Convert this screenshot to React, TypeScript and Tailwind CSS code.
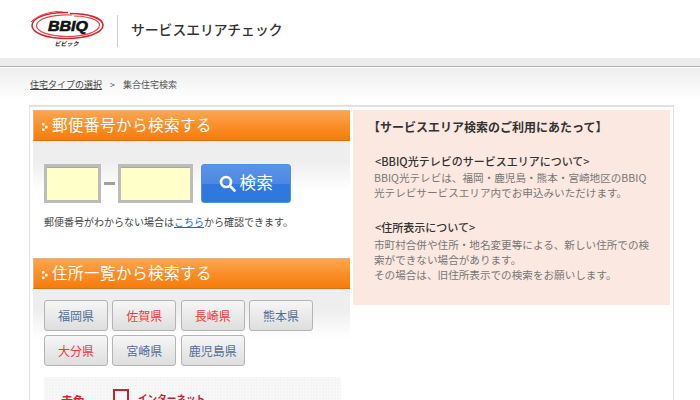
import React from 'react';

const font = { fontFamily: '"Noto Sans CJK JP", "Liberation Sans", sans-serif' };

const prefectures = [
  { name: '福岡県', active: false },
  { name: '佐賀県', active: true },
  { name: '長崎県', active: true },
  { name: '熊本県', active: false },
  { name: '大分県', active: true },
  { name: '宮崎県', active: false },
  { name: '鹿児島県', active: false },
];

const Logo = () => (
  <svg width="76" height="44" viewBox="0 0 76 44" className="block">
    <path d="M38 1.5 C16 1 2 7 2 14.5 C2 22 16 27.5 36 27.5 C57 27.5 73 22 73 14 C73 7 58 2.5 40 2.5" fill="none" stroke="#d8262c" strokeWidth="1.6" />
    <path d="M42 4 C22 3 7 8 6.5 14.5 C6.5 21 20 25.5 37 25.5 C54 25.5 69.5 21 69.5 14 C69.5 8.5 56 5 44 5" fill="none" stroke="#e4474c" strokeWidth="1.2" />
    <path d="M1 11 C7 4 20 0.5 33 0" fill="none" stroke="#e4474c" strokeWidth="1" />
    <text x="18" y="20" textLength="40" lengthAdjust="spacingAndGlyphs" fontFamily="Liberation Sans, sans-serif" fontSize="14" fontWeight="700" fontStyle="italic" fill="#111" stroke="#111" strokeWidth="0.6">BBIQ</text>
    <text x="36.5" y="35" textAnchor="middle" fontFamily="Noto Sans CJK JP, sans-serif" fontSize="6" fontWeight="700" fontStyle="italic" fill="#222">ビビック</text>
  </svg>
);

const SectionBar = ({ title }: { title: string }) => (
  <div className="flex items-center h-[31px] pl-[8px] gap-[4px] border-t border-l border-[#eeb07a] border-b border-b-[#d9700f] bg-gradient-to-b from-[#f9a652] via-[#fb8f26] to-[#f47c0b] text-white text-[15.6px] tracking-[0.4px]">
    <svg width="6" height="8" viewBox="0 0 6 8" className="mt-[2px]" fill="white">
      <rect x="0" y="0" width="2.5" height="2.5" />
      <rect x="3" y="2.8" width="2.5" height="2.5" />
      <rect x="0" y="5.5" width="2.5" height="2.5" />
    </svg>
    <span className="leading-none pb-[2px]">{title}</span>
  </div>
);

const ZipInput = ({ width }: { width: string }) => (
  <input className={`${width} h-[39px] bg-[#ffffc9] border-[3px] border-[#bcbcb8] shadow-[inset_0_1px_0_#a8a8a0] outline-none`} />
);

export default function App() {
  return (
    <div style={font} className="w-[700px] h-[400px] overflow-hidden bg-white text-[#333]">
      <header className="flex items-center h-[58px] pl-[30px]">
        <div className="pt-[8px]">
          <Logo />
        </div>
        <div className="w-px h-[32px] bg-[#ccc] ml-[11px] mt-[3px]" />
        <h1 className="ml-[13px] mt-[1px] text-[13.8px] font-medium text-[#333]">サービスエリアチェック</h1>
      </header>

      <div className="h-[8px] bg-[#ececec] bg-[radial-gradient(#ffffff_0.6px,transparent_0.7px)] bg-[length:2px_2px]" />
      <div className="h-px bg-[#aeaeae]" />

      <nav className="flex items-center h-[33px] pl-[30px] pt-[2px] text-[9px] border-t border-white bg-gradient-to-b from-[#eeeeee] to-white">
        <a className="underline text-[#444]">住宅タイプの選択</a>
        <span className="ml-[8px] mr-[8px] text-[#555]">&gt;</span>
        <span className="text-[#555]">集合住宅検索</span>
      </nav>

      <main className="ml-[29px] mt-[5px] w-[645px] border-t-2 border-l border-r border-[#e2e2e2] pl-[3px] pr-[3px] pt-[3px] flex gap-[3px]">
        <section className="w-[317px] shrink-0">
          <SectionBar title="郵便番号から検索する" />
          <div className="bg-gradient-to-b from-[#eeeeee] from-40% to-white to-100% h-[50px] -mb-[50px]" />
          <div className="relative pt-[23px] pl-[11px]">
            <div className="flex items-center">
              <ZipInput width="w-[57px]" />
              <span className="w-[17px] px-[3px]"><span className="block h-[3px] bg-[#a0a0a0]" /></span>
              <ZipInput width="w-[75px]" />
              <button className="ml-[8px] flex items-center justify-center gap-[4px] w-[90px] h-[39px] rounded-[3px] border border-[#4f8fe0] text-white text-[16.5px] bg-[linear-gradient(#5a93e8_0%,#4c88e4_50%,#2f78de_50%,#2f78de_100%)]">
                <svg width="17" height="17" viewBox="0 0 17 17" fill="none" stroke="white" strokeWidth="2.6">
                  <circle cx="7" cy="7" r="5" />
                  <path d="M11 11l4.5 4.5" strokeLinecap="round" />
                </svg>
                <span className="leading-none pb-[2px] tracking-[0.5px]">検索</span>
              </button>
            </div>
            <p className="mt-[11px] text-[10px] leading-[15px] text-[#444]">
              郵便番号がわからない場合は<a className="underline text-[#1f6fb5]">こちら</a>から確認できます。
            </p>
          </div>

          <div className="mt-[29px]">
            <SectionBar title="住所一覧から検索する" />
            <div className="bg-gradient-to-b from-[#eeeeee] from-40% to-white to-100% h-[50px] -mb-[50px]" />
            <div className="relative pt-[11px] pl-[11px] grid grid-cols-[repeat(4,64px)] gap-x-[4.34px] gap-y-[4px]">
              {prefectures.map((p) => (
                <button
                  key={p.name}
                  className={`h-[31px] rounded-[3px] border border-[#b4b4b4] bg-gradient-to-b from-[#f6f6f6] to-[#dedede] text-[12px] leading-none ${p.active ? 'text-[#f03a3a]' : 'text-[#4f6f96]'}`}
                >
                  {p.name}
                </button>
              ))}
            </div>
            <div className="ml-[11px] mt-[11px] w-[297px] h-[60px] bg-[#f5f5f5] bg-[radial-gradient(#ffffff_0.6px,transparent_0.7px)] bg-[length:3px_3px] pl-[17px] pt-[12px] flex items-start">
              <span className="text-[12px] font-bold text-[#d8262c] leading-[16px] mt-[4px]">赤色</span>
              <span className="text-[10px] text-[#999] leading-[16px] mt-[4px] ml-[5px]">…</span>
              <span className="ml-[13px] w-[16px] h-[16px] border-2 border-[#c0272d]" />
              <span className="ml-[9px] text-[9.6px] font-bold text-[#c0272d] leading-[16px] mt-[1px]">インターネット</span>
            </div>
          </div>
        </section>

        <aside className="w-[317px] h-[195px] bg-[#fbe8e0] pl-[15px] pt-[9px]">
          <h2 className="text-[12px] font-bold leading-[16px] text-[#333]">【サービスエリア検索のご利用にあたって】</h2>
          <h3 className="mt-[19px] ml-[7px] text-[11px] font-medium leading-[15px] text-[#333]">&lt;BBIQ光テレビのサービスエリアについて&gt;</h3>
          <p className="mt-[2px] ml-[6px] w-[285px] text-[10.6px] leading-[14.7px] text-[#777]">
            BBIQ光テレビは、福岡・鹿児島・熊本・宮崎地区のBBIQ<br />
            光テレビサービスエリア内でお申込みいただけます。
          </p>
          <h3 className="mt-[20px] ml-[7px] text-[11px] font-medium leading-[15px] text-[#333]">&lt;住所表示について&gt;</h3>
          <p className="mt-[3px] ml-[6px] w-[285px] text-[10.6px] leading-[14.7px] text-[#777]">
            市町村合併や住所・地名変更等による、新しい住所での検<br />
            索ができない場合があります。<br />
            その場合は、旧住所表示での検索をお願いします。
          </p>
        </aside>
      </main>
    </div>
  );
}
